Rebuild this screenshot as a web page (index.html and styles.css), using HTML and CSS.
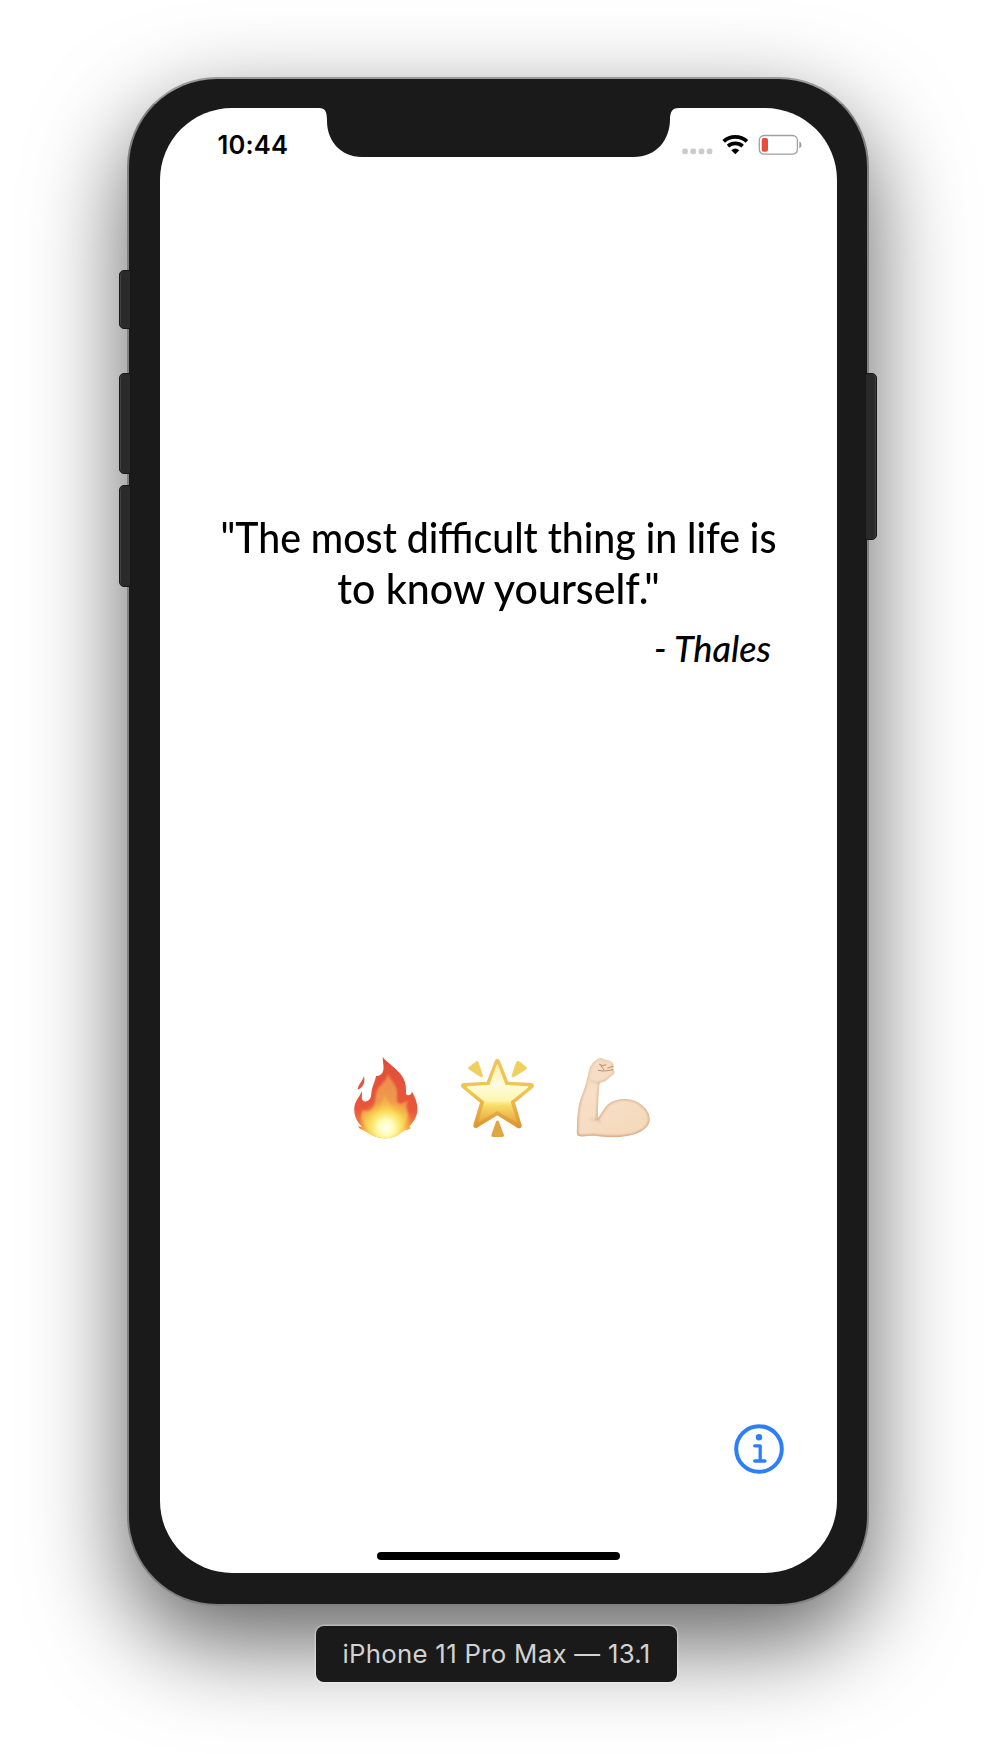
FILE: index.html
```html
<!DOCTYPE html>
<html lang="en">
<head>
<meta charset="utf-8">
<title>iPhone 11 Pro Max</title>
<link rel="stylesheet" href="styles.css">
</head>
<body>
<main class="stage">
  <div class="phone">
    <span class="key key-mute"></span>
    <span class="key key-up"></span>
    <span class="key key-down"></span>
    <span class="key key-power"></span>
    <div class="screen">
      <svg class="notch" width="360" height="50" viewBox="0 0 360 50"><path d="M0 0H360C354 0 351 3 351 11C351 32 337.500 49 314.500 49H43C21 49 8 32 8 13C8 3 6 0 0 0Z" fill="#1a1a1a"/></svg>
      <header class="status">
        <span class="time">10:44</span>
        <svg class="signals" width="122" height="24" viewBox="680 132 122 24">
          <g fill="#cbcbcb"><rect x="682.200" y="148.500" width="5.700" height="5.800" rx="2.200"/><rect x="690.400" y="148.500" width="5.700" height="5.800" rx="2.200"/><rect x="698.600" y="148.500" width="5.700" height="5.800" rx="2.200"/><rect x="706.700" y="148.500" width="5.700" height="5.800" rx="2.200"/></g>
          <g fill="none" stroke="#000" stroke-width="3.700"><path d="M723.700 141.400A17 17 0 0 1 746.900 141.400"/><path d="M728 146.200A11 11 0 0 1 742.600 146.200"/></g>
          <path d="M731.300 150.300A6.200 6.200 0 0 1 739.300 150.300L735.300 154.300Z"/>
          <rect x="759.300" y="135.500" width="38.100" height="18.700" rx="4.800" fill="none" stroke="#a0a0a0" stroke-width="1.300"/>
          <rect x="761.700" y="138" width="6.300" height="13.700" rx="2" fill="#eb4d3d"/>
          <path d="M799.300 141.600Q801.500 142.500 801.500 144.900T799.300 148.200Z" fill="#999"/>
        </svg>
      </header>
      <section class="quote">
        <p class="line line-one">"The most difficult thing in life is</p>
        <p class="line line-two">to know yourself."</p>
        <p class="author">- Thales</p>
      </section>
      <div class="emojis">
        <svg width="110" height="110" viewBox="0 0 330 330">
          <defs>
            <linearGradient id="flame" x1="0" y1="0" x2="0" y2="1"><stop offset="0" stop-color="#e14e38"/><stop offset=".65" stop-color="#e9573a"/><stop offset="1" stop-color="#f5a33d"/></linearGradient>
            <linearGradient id="flame-mid" x1="0" y1="0" x2="0" y2="1"><stop offset="0" stop-color="#ec8a54"/><stop offset=".5" stop-color="#f09a4a"/><stop offset="1" stop-color="#fbdd52"/></linearGradient>
            <radialGradient id="glow" cx=".5" cy=".62" r=".55"><stop offset="0" stop-color="#fffff0"/><stop offset=".28" stop-color="#fffcb8"/><stop offset=".6" stop-color="#fde65b" stop-opacity=".75"/><stop offset="1" stop-color="#f8b545" stop-opacity="0"/></radialGradient>
            <filter id="haze"><feGaussianBlur stdDeviation="3.500"/></filter>
            <clipPath id="flame-clip"><path d="M43 150H232V207C232 230 222 244 207 261L213 264C203 270 192 270 186 276C172 289 156 295 137 295C113 295 95 286 80 276C70 270 59 269 53 259C59 260 63 261 66 260C48 244 41 222 43 201Z"/></clipPath>
          </defs>
          <path d="M128 51C136 63 161 79 181 101C201 125 198 149 198 163C206 169 214 165 216 154C220 167 232 180 232 207C232 230 222 244 207 261L213 264C203 270 192 270 186 276C172 289 156 295 137 295C113 295 95 286 80 276C70 270 59 269 53 259C59 260 63 261 66 260C48 244 41 222 43 201C47 177 61 171 64 154C70 166 58 181 76 185C91 182 93 172 94 160C96 138 105 127 108 108C116 109 124 104 128 97C134 85 128 68 128 51Z" fill="url(#flame)"/>
          <path d="M142 94C146 117 164 127 169 145C174 160 167 176 174 188C183 196 194 184 203 182C192 201 213 222 198 245C188 263 163 290 137 292C107 292 83 271 73 253C60 234 64 217 69 210C84 217 98 211 103 194C108 176 105 162 114 147C123 131 147 120 142 94Z" fill="url(#flame-mid)" filter="url(#haze)"/>
          <path d="M138 158C133 179 153 188 158 210C163 222 173 230 187 222C180 244 183 258 166 275Q153 288 137 290Q111 286 96 270Q83 255 83 239C98 242 112 230 116 213C120 189 133 177 138 158Z" fill="#fac14b" opacity=".6" filter="url(#haze)"/>
          <g clip-path="url(#flame-clip)"><ellipse cx="138" cy="244" rx="78" ry="76" fill="url(#glow)"/></g>
          <path d="M72 108C77 132 66 144 53 149C54 133 66 127 72 108Z" fill="#e4563c"/>
        </svg>
        <svg width="110" height="110" viewBox="0 0 330 330">
          <defs>
            <linearGradient id="star" gradientUnits="userSpaceOnUse" x1="142" y1="57" x2="142" y2="264"><stop offset="0" stop-color="#f0c257"/><stop offset=".48" stop-color="#f0c552"/><stop offset="1" stop-color="#dd9433"/></linearGradient>
            <linearGradient id="star-in" gradientUnits="userSpaceOnUse" x1="142" y1="70" x2="142" y2="250"><stop offset="0" stop-color="#fbefa0"/><stop offset=".35" stop-color="#fffcdc"/><stop offset=".62" stop-color="#fdf6b0"/><stop offset=".7" stop-color="#f8dd68"/><stop offset="1" stop-color="#e5a43c"/></linearGradient>
            <filter id="star-soft"><feGaussianBlur stdDeviation="2"/></filter>
          </defs>
          <path d="M142 65L169 133L244 137L186 185L207 257L142 217L78 256L99 185L41 137L116 133Z" fill="url(#star)" stroke="url(#star)" stroke-width="16" stroke-linejoin="round"/>
          <path d="M142 75L165 137L232 141L179 184L198 244L142 210L87 244L106 184L53 141L120 137Z" fill="url(#star-in)" stroke="url(#star-in)" stroke-width="5" stroke-linejoin="round" filter="url(#star-soft)"/>
          <path d="M84 66L98 107Q98 113 92 110L57 87Q54 83 58 81L79 65Q82 62 84 66ZM200 66L186 107Q186 113 192 110L228 87Q231 83 227 80L207 65Q203 62 200 66Z" fill="#efcf5d" stroke="#f0d56c" stroke-width="3"/>
          <path d="M138 245Q142 238 147 245L162 286Q162 291 156 291H129Q123 291 124 285Z" fill="#e1a542"/>
        </svg>
        <svg width="110" height="110" viewBox="0 0 330 330">
          <defs>
            <linearGradient id="arm" x1="0" y1="0" x2=".4" y2="1"><stop offset="0" stop-color="#f3d9c0"/><stop offset=".45" stop-color="#f7e0c8"/><stop offset="1" stop-color="#f5dabd"/></linearGradient>
            <linearGradient id="arm-edge" x1="0" y1="0" x2="0" y2="1"><stop offset="0" stop-color="#ecccae"/><stop offset="1" stop-color="#d39f7c"/></linearGradient>
            <filter id="soft"><feGaussianBlur stdDeviation="2.500"/></filter>
            <clipPath id="arm-clip"><path d="M88 87C94 71 107 57 121 54C128 54 132 59 137 59C148 60 159 66 161 75C164 80 158 85 159 89C166 93 164 103 157 106C145 113 139 128 119 128C115 157 115 183 113 235C124 224 130 205 145 192C175 169 221 174 244 194C263 209 274 229 267 250C258 270 233 283 201 288C163 295 133 291 111 288C89 284 69 293 54 287C48 282 51 270 51 257C53 219 54 196 65 168C76 142 83 113 88 87Z"/></clipPath>
          </defs>
          <path d="M88 87C94 71 107 57 121 54C128 54 132 59 137 59C148 60 159 66 161 75C164 80 158 85 159 89C166 93 164 103 157 106C145 113 139 128 119 128C115 157 115 183 113 235C124 224 130 205 145 192C175 169 221 174 244 194C263 209 274 229 267 250C258 270 233 283 201 288C163 295 133 291 111 288C89 284 69 293 54 287C48 282 51 270 51 257C53 219 54 196 65 168C76 142 83 113 88 87Z" fill="url(#arm)"/>
          <g clip-path="url(#arm-clip)" fill="none">
            <path d="M88 87C94 71 107 57 121 54C128 54 132 59 137 59C148 60 159 66 161 75C164 80 158 85 159 89C166 93 164 103 157 106C145 113 139 128 119 128C115 157 115 183 113 235C124 224 130 205 145 192C175 169 221 174 244 194C263 209 274 229 267 250C258 270 233 283 201 288C163 295 133 291 111 288C89 284 69 293 54 287C48 282 51 270 51 257C53 219 54 196 65 168C76 142 83 113 88 87Z" stroke="url(#arm-edge)" stroke-width="8" filter="url(#soft)"/>
            <path d="M90 121Q104 131 120 128M91 239Q103 244 113 235Q116 244 123 248" stroke="#dcae8e" stroke-width="3" filter="url(#soft)"/>
          </g>
          <path d="M118 73Q127 80 138 75M158 79L143 84M115 91Q130 96 159 89M123 77L132 90" stroke="#a8704f" stroke-width="3" fill="none" stroke-linecap="round" opacity=".75"/>
        </svg>
      </div>
      <svg class="info" width="50" height="50" viewBox="0 0 50 50"><g fill="none" stroke="#2c80f7" stroke-linecap="round"><circle cx="25" cy="25" r="22.800" stroke-width="4"/><path d="M20.700 21.800H26.200V37M20.700 37H31" stroke-width="3.300" stroke-linejoin="round"/></g><circle cx="25" cy="13.300" r="3.200" fill="#2c80f7"/></svg>
      <div class="home"></div>
    </div>
  </div>
  <div class="device-label">iPhone 11 Pro Max — 13.1</div>
</main>
</body>
</html>
```
FILE: styles.css
```css
* { box-sizing: border-box; }
body { margin: 0; background: #fff; overflow: hidden; }
.stage { width: 996px; height: 1754px; padding-top: 77px; display: flex; flex-direction: column; align-items: center; }
.phone { position: relative; width: 742px; height: 1529px; padding: 29px 30px 29px 31px; background: #1a1a1a; border: 2px solid #808080; border-top-color: #999; border-radius: 90px; box-shadow: 0 36px 96px rgba(0, 0, 0, .62); }
.screen { position: relative; height: 1465px; background: #fff; border-radius: 72px; display: flex; flex-direction: column; }
.notch { position: absolute; top: 0; left: 159px; }
.key { position: absolute; width: 12px; background: #2a2a2a; border: 1px solid #171717; box-shadow: inset 1px 0 #414141; border-radius: 5px 0 0 5px; left: -10px; }
.key-mute { top: 191px; height: 59px; }
.key-up { top: 294px; height: 101px; }
.key-down { top: 406px; height: 102px; }
.key-power { top: 294px; height: 167px; left: auto; right: -10px; border-radius: 0 5px 5px 0; box-shadow: inset -1px 0 #414141; }
.status { height: 48px; padding: 24px 35px 0 57.500px; display: flex; justify-content: space-between; }
.time { font: 600 25.5px/26px Inter, sans-serif; letter-spacing: .2px; }
.quote { margin-top: 356px; color: #000; font-family: Lato, sans-serif; }
.line { margin: 0; font-weight: 500; font-size: 41.500px; line-height: 50.500px; white-space: nowrap; text-align: center; }
.line-one { transform: scaleX(.945); }
.line-two { transform: scaleX(.99); }
.author { margin: 10px 66px 0 0; font-size: 36px; line-height: 50px; font-weight: 500; font-style: italic; text-align: right; }
.emojis { display: flex; margin: 367px 0 0 180px; gap: 0; }
.info { margin: 274px 0 0 574px; }
.home { width: 243px; height: 8.500px; margin: auto auto 13px 217px; border-radius: 5px; background: #000; }
.device-label { width: 361px; height: 56px; margin-top: 20px; margin-right: 3px; background: #1a1a1a; border-radius: 8px; box-shadow: 0 0 0 1.500px rgba(255, 255, 255, .3); color: #d2d2d2; font: 400 25.800px/56px Inter, sans-serif; letter-spacing: .28px; text-align: center; white-space: nowrap; position: relative; }
```
